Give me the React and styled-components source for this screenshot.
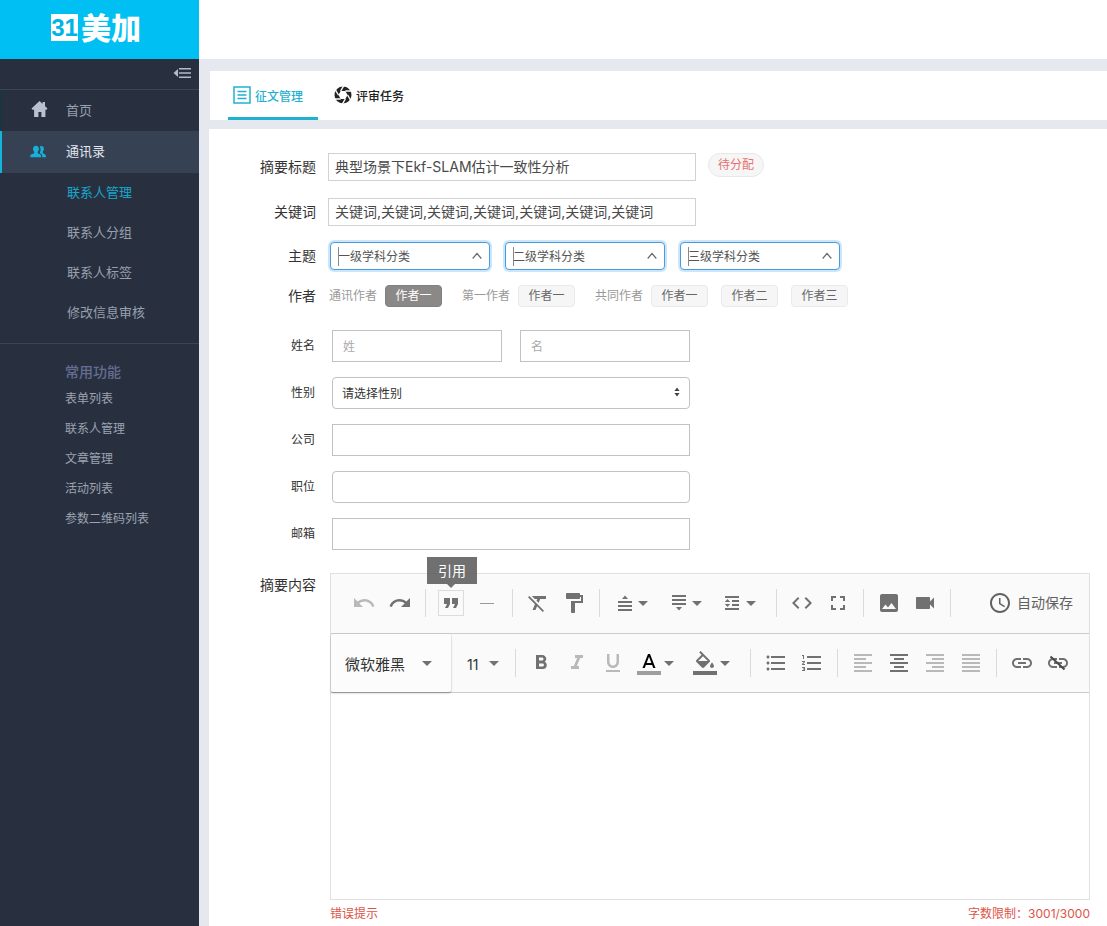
import React from "react";
import styled, { createGlobalStyle } from "styled-components";
import {
  MdUndo,
  MdRedo,
  MdFormatQuote,
  MdFormatClear,
  MdFormatPaint,
  MdCode,
  MdFullscreen,
  MdImage,
  MdVideocam,
  MdAccessTime,
  MdArrowDropDown,
  MdFormatBold,
  MdFormatItalic,
  MdFormatUnderlined,
  MdFormatListBulleted,
  MdFormatListNumbered,
  MdFormatAlignLeft,
  MdFormatAlignCenter,
  MdFormatAlignRight,
  MdFormatAlignJustify,
  MdLink,
} from "react-icons/md";

const GlobalStyle = createGlobalStyle`
  *, *::before, *::after { box-sizing: border-box; }
  body { margin: 0; background: #e6e8ef; }
  body, button, input, select, textarea {
    font-family: Inter, "Noto Sans CJK SC", sans-serif;
  }
  button { padding: 0; border: 0; background: none; cursor: pointer; }
  svg { display: block; flex: none; }
`;

const Page = styled.div`
  display: flex;
  min-height: 100vh;
`;

/* Sidebar */
const Sidebar = styled.aside`
  flex: none;
  width: 199px;
  background: #28303f;
`;

const Logo = styled.a`
  display: flex;
  align-items: center;
  gap: 3px;
  height: 59px;
  padding: 0 0 4px 51px;
  background: #00c0f3;
  color: #fff;
  text-decoration: none;
`;

const LogoMark = styled.span`
  width: 27px;
  height: 27px;
  background: #fff;
  color: #00b4e8;
  font: 700 24px/27px "Liberation Sans", sans-serif;
  text-align: center;
`;

const LogoName = styled.span`
  font-size: 30px;
  font-weight: 900;
  line-height: 30px;
`;

const CollapseBar = styled.div`
  display: flex;
  justify-content: flex-end;
  height: 31px;
  padding: 7px 8px 0 0;
  border-bottom: 1px solid #3c4556;
`;

const CollapseButton = styled.button`
  height: 14px;
  color: #b4bac8;
`;

const NavItem = styled.a`
  display: flex;
  align-items: center;
  gap: 18px;
  height: ${(p) => (p.$active ? 42 : 41)}px;
  padding: 0 0 3px 28px;
  border-left: 2px solid ${(p) => (p.$active ? "#12b5dc" : "#1c3440")};
  background: ${(p) => (p.$active ? "#364154" : "transparent")};
  color: ${(p) => (p.$active ? "#e3e7ee" : "#99a0b0")};
  font-size: 13px;
  text-decoration: none;
`;

const SubNav = styled.nav`
  display: flex;
  flex-direction: column;
  padding-bottom: 10px;
  border-bottom: 1px solid #3c4556;
`;

const SubLink = styled.a`
  height: 40px;
  padding-left: 67px;
  color: ${(p) => (p.$active ? "#17a6cc" : "#989fae")};
  font-size: 13px;
  line-height: 38px;
  text-decoration: none;
`;

const Shortcuts = styled.nav`
  display: flex;
  flex-direction: column;
  padding: 15px 0 0 65px;
`;

const ShortcutTitle = styled.h2`
  margin: 0;
  color: #656d92;
  font-size: 14px;
  font-weight: 500;
  line-height: 25px;
`;

const ShortcutLink = styled.a`
  color: #9ca3b1;
  font-size: 12px;
  line-height: 30px;
  text-decoration: none;
`;

/* Main column */
const Main = styled.main`
  flex: 1;
  min-width: 0;
  display: flex;
  flex-direction: column;
`;

const TopBar = styled.header`
  height: 59px;
  background: #fff;
`;

const Tabs = styled.nav`
  display: flex;
  gap: 11px;
  height: 49px;
  margin: 12px 0 9px 11px;
  padding-left: 18px;
  background: #fff;
`;

const Tab = styled.a`
  display: flex;
  align-items: center;
  gap: 4px;
  min-width: 90px;
  padding: 2px 5px 0;
  border-bottom: 3px solid ${(p) => (p.$active ? "#1fb1d0" : "transparent")};
  color: ${(p) => (p.$active ? "#1fb1d0" : "#222")};
  font-size: 12px;
  font-weight: 500;
  text-decoration: none;
`;

const Form = styled.form`
  flex: 1;
  margin-left: 10px;
  padding: 24px 17px 2px 0;
  background: #fff;
`;

const Row = styled.div`
  display: flex;
  align-items: ${(p) => (p.$top ? "flex-start" : "center")};
  gap: ${(p) => p.$gap || 12}px;
  margin-bottom: ${(p) => p.$space || 16}px;
`;

const Label = styled.label`
  flex: none;
  width: ${(p) => (p.$small ? 106 : 107)}px;
  color: #333;
  font-size: ${(p) => (p.$small ? 12 : 14)}px;
  line-height: 24px;
  text-align: right;
`;

const TitleInput = styled.input`
  width: 368px;
  height: 28px;
  padding: 0 6px 2px;
  border: 1px solid #d2d2d2;
  background: #fff;
  color: #4a4a4a;
  font-size: 14px;
  outline: none;
`;

const Status = styled.span`
  align-self: flex-start;
  padding: 0 9px;
  border: 1px solid #e8e8e8;
  border-radius: 12px;
  background: #f6f6f6;
  color: #e8716f;
  font-size: 12px;
  line-height: 22px;
`;

const TopicList = styled.div`
  display: flex;
  gap: 15px;
  padding-left: 2px;
`;

const TopicBox = styled.span`
  position: relative;
  display: block;
  color: #666;

  &::before {
    content: "";
    position: absolute;
    top: 5px;
    left: 8px;
    width: 1px;
    height: 19px;
    background: #888;
  }

  svg {
    position: absolute;
    top: 10px;
    right: 8px;
    pointer-events: none;
  }
`;

const TopicSelect = styled.select`
  display: block;
  appearance: none;
  width: 160px;
  height: 28px;
  padding: 0 7px;
  border: 1px solid #4a9bd9;
  border-radius: 4px;
  background: #fff;
  box-shadow: 0 0 0 2px #cbe6fb;
  color: #555;
  font-size: 12px;
  outline: none;
`;

const AuthorGroups = styled.div`
  display: flex;
  gap: 20px;
  padding-left: 1px;
`;

const AuthorGroup = styled.div`
  display: flex;
  align-items: center;
  gap: 8px;
  color: #999;
  font-size: 12px;
  line-height: 24px;
`;

const TagList = styled.div`
  display: flex;
  gap: 13px;
`;

const Tag = styled.button`
  width: 57px;
  height: 22px;
  border: 1px solid ${(p) => (p.$selected ? "#827f7f" : "#eaeaea")};
  border-radius: 4px;
  background: ${(p) => (p.$selected ? "#8b8888" : "#f6f6f6")};
  color: ${(p) => (p.$selected ? "#fff" : "#666")};
  font-size: 12px;
  line-height: 20px;
`;

const Fields = styled.div`
  display: flex;
  gap: 18px;
  width: 358px;
`;

const Field = styled.input`
  flex: 1;
  min-width: 0;
  height: 32px;
  padding: 0 10px;
  border: 1px solid #c2c2c2;
  border-radius: ${(p) => (p.$round ? 4 : 0)}px;
  background: #fff;
  color: #333;
  font-size: 12px;
  outline: none;

  &::placeholder { color: #aaa; }
`;

const GenderBox = styled.span`
  position: relative;
  flex: 1;

  svg {
    position: absolute;
    top: 10px;
    right: 10px;
    pointer-events: none;
  }
`;

const GenderSelect = styled.select`
  display: block;
  appearance: none;
  width: 100%;
  height: 32px;
  padding: 0 9px;
  border: 1px solid #c2c2c2;
  border-radius: 4px;
  background: #fff;
  color: #333;
  font-size: 12px;
  outline: none;
`;

/* Editor */
const EditorColumn = styled.div`
  flex: 1;
  min-width: 0;
`;

const Editor = styled.div`
  border: 1px solid #e0e0e0;
`;

const Toolbar = styled.div`
  display: flex;
  align-items: center;
  height: ${(p) => (p.$first ? 60 : 59)}px;
  padding: ${(p) => (p.$first ? "0 0 2px 8px" : "0")};
  border-bottom: 1px solid #cccccc;
  background: #fafafa;
`;

const ToolGroup = styled.div`
  display: flex;
  align-items: center;
  gap: 12px;
  height: 28px;
  padding: 0 13px;
  border-right: 1px solid ${(p) => (p.$last ? "transparent" : "#dadada")};
`;

const Tool = styled.button`
  position: relative;
  display: flex;
  align-items: center;
  height: 24px;
  color: ${(p) => (p.$muted ? "#b9b9b9" : "#717171")};
  outline: ${(p) => (p.$boxed ? "1px solid #dcdcdc" : "none")};

  svg + svg { margin-left: ${(p) => (p.$color ? -4 : -6)}px; }
`;

const Tooltip = styled.span`
  position: absolute;
  bottom: 31px;
  left: 50%;
  width: 50px;
  margin-left: -24px;
  background: rgba(97, 97, 97, 0.9);
  color: #fff;
  font-size: 14px;
  line-height: 27px;
  text-align: center;

  &::after {
    content: "";
    position: absolute;
    top: 100%;
    left: 20px;
    border: 4px solid transparent;
    border-top-color: #717171;
    border-bottom: 0;
  }
`;

const AutoSave = styled.button`
  display: flex;
  align-items: center;
  gap: 5px;
  margin: 0 16px 0 auto;
  color: #616161;
  font-size: 14px;
  line-height: 24px;
`;

const FontBox = styled.span`
  position: relative;
  display: block;
  align-self: stretch;
  color: #717171;

  svg {
    position: absolute;
    top: 50%;
    right: ${(p) => (p.$family ? 12 : 9)}px;
    margin-top: -12px;
    pointer-events: none;
  }
`;

const FontSelect = styled.select`
  appearance: none;
  display: block;
  width: ${(p) => (p.$family ? 120 : 64)}px;
  height: 100%;
  padding: 2px 0 0 ${(p) => (p.$family ? 14 : 16)}px;
  border: 0;
  border-radius: 2px;
  background: ${(p) => (p.$family ? "#fcfcfc" : "transparent")};
  box-shadow: ${(p) => (p.$family ? "0 1px 2px rgba(0, 0, 0, 0.35)" : "none")};
  color: #333;
  font-size: ${(p) => (p.$family ? 15 : 14)}px;
  outline: none;
`;

const SizeGroup = styled.div`
  display: flex;
  height: 28px;
  border-right: 1px solid #dadada;
`;

const Content = styled.textarea`
  display: block;
  width: 100%;
  height: 206px;
  padding: 12px;
  border: 0;
  background: #fff;
  font-size: 14px;
  outline: none;
  resize: none;
`;

const Notes = styled.div`
  display: flex;
  justify-content: space-between;
  padding-top: 4px;
  color: #dd5347;
  font-size: 12px;
  line-height: 20px;
`;

/* Drawn icons */
const Svg = ({ size = 24, children }) => (
  <svg width={size} height={size} viewBox="0 0 24 24" fill="currentColor" aria-hidden="true">
    {children}
  </svg>
);

const HomeIcon = () => (
  <svg width="18" height="18" viewBox="0 0 18 18" fill="#b9c0d0" aria-hidden="true">
    <path d="M9.500 1 17.500 8.600 16.500 9.700H15.400V17H11.400V12H8.400V17H4.100V9.700H2.500L1.500 8.600ZM12.600 2H15V7.500L12.600 5.200Z" />
  </svg>
);

const PeopleIcon = () => (
  <svg width="18" height="18" viewBox="0 0 18 18" fill="#16b0d8" aria-hidden="true">
    <path d="M6 3.800c1.900 0 2.900 1.300 2.900 3.200 0 1.200-.5 2.200-1.200 2.800v1.300c0 .7 3.400 1 3.400 3v1.200H.3v-1.200c0-2 3.900-2.300 3.900-3V9.800C3.500 9.200 3 8.200 3 7c0-1.900 1.100-3.200 3-3.200z" />
    <path d="M9.700 5c.4-.6 1-.9 1.800-.9 1.500 0 2.400 1.200 2.400 2.900 0 1.100-.4 2-1.100 2.600v1.500c0 .6 3.100 1 3.100 3v1.200h-3.700v-1.200c0-1.500-1.100-2.300-2.300-2.800v-1c.6-.9.800-2.100.7-3.200 0-.8-.4-1.600-.9-2.100z" />
  </svg>
);

const CollapseIcon = () => (
  <svg width="18" height="14" viewBox="0 0 18 14" fill="currentColor" aria-hidden="true">
    <path d="M5 3v8L0.500 7zM6 2h12v1.500H6zM6 6.300h12v1.500H6zM6 10.500h12V12H6z" />
  </svg>
);

const ListIcon = () => (
  <svg width="18" height="18" viewBox="0 0 18 18" fill="none" stroke="currentColor" aria-hidden="true">
    <path d="M1 1h16v16H1z" strokeWidth="1.500" />
    <path d="M4.500 5.500h9M4.500 9h9M4.500 12.500h9" strokeWidth="1.500" />
  </svg>
);

const ApertureIcon = () => (
  <svg width="18" height="18" viewBox="0 0 18 18" aria-hidden="true">
    <circle cx="9" cy="9" r="8.500" fill="#222" />
    <path d="M13.600 9 11.300 13H6.700L4.400 9 6.700 5h4.600z" fill="#fff" />
    {[0, 60, 120, 180, 240, 300].map((angle) => (
      <path
        key={angle}
        d="M11.300 13 7.850 19"
        stroke="#fff"
        strokeWidth="1.400"
        transform={`rotate(${angle} 9 9)`}
      />
    ))}
  </svg>
);

const ChevronUp = () => (
  <svg width="10" height="8" viewBox="0 0 10 8" fill="none" stroke="currentColor" aria-hidden="true">
    <path d="M.7 6.500 5 1.500l4.300 5" strokeWidth="1.200" />
  </svg>
);

const Sorter = () => (
  <svg width="6" height="10" viewBox="0 0 6 10" fill="#444" aria-hidden="true">
    <path d="M3 .5 5.600 4H.4zM3 9.500.4 6h5.200z" />
  </svg>
);

const RuleIcon = () => (
  <Svg>
    <path fill="#999" d="M5 12h14v1H5z" />
  </Svg>
);

const SpaceBefore = () => (
  <Svg>
    <path d="M12 4.500 15 8H9zM5 10h14v2H5zM5 14h14v2H5zM5 18h14v2H5z" />
  </Svg>
);

const SpaceAfter = () => (
  <Svg>
    <path d="M5 4h14v2H5zM5 8h14v2H5zM5 12h14v2H5zM9 16h6l-3 3.500z" />
  </Svg>
);

const LineHeight = () => (
  <Svg>
    <path d="M4 5h14v2H4zM11 9h7v2h-7zM11 13h7v2h-7zM4 17h14v2H4zM6.500 8 9.200 11H3.800zM3.800 13h5.400l-2.700 3z" />
  </Svg>
);

const TextColor = () => (
  <Svg>
    <path fill="#9e9e9e" d="M0 20h24v4H0z" />
    <path
      fill="#000"
      d="M11 3 5.500 17h2.250l1.120-3h6.250l1.120 3h2.250L13 3h-2zm-1.380 9L12 5.670 14.380 12H9.620z"
    />
  </Svg>
);

const FillColor = () => (
  <Svg>
    <path d="M16.560 8.940 7.620 0 6.210 1.410l2.380 2.380-5.150 5.150c-.59.59-.59 1.540 0 2.120l5.500 5.500c.29.29.68.44 1.060.44s.77-.15 1.060-.44l5.500-5.500c.59-.58.59-1.530 0-2.120zM5.210 10 10 5.210 14.790 10H5.210zM19 11.500s-2 2.170-2 3.500c0 1.100.9 2 2 2s2-.9 2-2c0-1.330-2-3.500-2-3.500zM0 20h24v4H0z" />
  </Svg>
);

const UnlinkIcon = () => (
  <Svg>
    <path d="M3.900 12c0-1.710 1.390-3.100 3.100-3.100h4V7H7c-2.760 0-5 2.240-5 5s2.240 5 5 5h4v-1.900H7c-1.710 0-3.100-1.390-3.100-3.100zM8 13h8v-2H8v2zm9-6h-4v1.900h4c1.710 0 3.100 1.390 3.100 3.100s-1.390 3.100-3.100 3.100h-4V17h4c2.760 0 5-2.240 5-5s-2.240-5-5-5z" />
    <path d="M4.500 5.500 18.500 18.500" stroke="#4a4a4a" strokeWidth="2" />
  </Svg>
);

const Arrow = () => <MdArrowDropDown size={24} />;

const subLinks = ["联系人管理", "联系人分组", "联系人标签", "修改信息审核"];
const shortcuts = ["表单列表", "联系人管理", "文章管理", "活动列表", "参数二维码列表"];
const topics = ["一级学科分类", "二级学科分类", "三级学科分类"];
const authors = [
  { role: "通讯作者", names: ["作者一"], selected: true },
  { role: "第一作者", names: ["作者一"] },
  { role: "共同作者", names: ["作者一", "作者二", "作者三"] },
];

const ToolButton = ({ icon: Icon, label, children, ...rest }) => (
  <Tool type="button" aria-label={label} {...rest}>
    <Icon size={24} />
    {children}
  </Tool>
);

export default function App() {
  return (
    <Page>
      <GlobalStyle />
      <Sidebar>
        <Logo href="#">
          <LogoMark>31</LogoMark>
          <LogoName>美加</LogoName>
        </Logo>
        <CollapseBar>
          <CollapseButton type="button" aria-label="收起菜单">
            <CollapseIcon />
          </CollapseButton>
        </CollapseBar>
        <NavItem href="#">
          <HomeIcon />
          首页
        </NavItem>
        <NavItem href="#" $active>
          <PeopleIcon />
          通讯录
        </NavItem>
        <SubNav>
          {subLinks.map((name, i) => (
            <SubLink key={name} href="#" $active={i === 0}>
              {name}
            </SubLink>
          ))}
        </SubNav>
        <Shortcuts>
          <ShortcutTitle>常用功能</ShortcutTitle>
          {shortcuts.map((name) => (
            <ShortcutLink key={name} href="#">
              {name}
            </ShortcutLink>
          ))}
        </Shortcuts>
      </Sidebar>

      <Main>
        <TopBar />
        <Tabs>
          <Tab href="#" $active>
            <ListIcon />
            征文管理
          </Tab>
          <Tab href="#">
            <ApertureIcon />
            评审任务
          </Tab>
        </Tabs>

        <Form>
          <Row $space={17}>
            <Label htmlFor="title">摘要标题</Label>
            <TitleInput id="title" defaultValue="典型场景下Ekf-SLAM估计一致性分析" />
            <Status>待分配</Status>
          </Row>
          <Row>
            <Label htmlFor="keywords">关键词</Label>
            <TitleInput id="keywords" defaultValue="关键词,关键词,关键词,关键词,关键词,关键词,关键词" />
          </Row>
          <Row $space={14}>
            <Label htmlFor="topic-0">主题</Label>
            <TopicList>
              {topics.map((name, i) => (
                <TopicBox key={name}>
                  <TopicSelect id={`topic-${i}`} aria-label={name}>
                    <option>{name}</option>
                  </TopicSelect>
                  <ChevronUp />
                </TopicBox>
              ))}
            </TopicList>
          </Row>
          <Row $space={22}>
            <Label as="span">作者</Label>
            <AuthorGroups>
              {authors.map((group) => (
                <AuthorGroup key={group.role}>
                  {group.role}
                  <TagList>
                    {group.names.map((name) => (
                      <Tag key={name} type="button" $selected={group.selected}>
                        {name}
                      </Tag>
                    ))}
                  </TagList>
                </AuthorGroup>
              ))}
            </AuthorGroups>
          </Row>

          <Row $gap={17} $space={15}>
            <Label $small htmlFor="surname">姓名</Label>
            <Fields>
              <Field id="surname" placeholder="姓" />
              <Field aria-label="名" placeholder="名" />
            </Fields>
          </Row>
          <Row $gap={17} $space={15}>
            <Label $small htmlFor="gender">性别</Label>
            <Fields>
              <GenderBox>
                <GenderSelect id="gender">
                  <option>请选择性别</option>
                </GenderSelect>
                <Sorter />
              </GenderBox>
            </Fields>
          </Row>
          <Row $gap={17} $space={15}>
            <Label $small htmlFor="company">公司</Label>
            <Fields>
              <Field id="company" />
            </Fields>
          </Row>
          <Row $gap={17} $space={15}>
            <Label $small htmlFor="position">职位</Label>
            <Fields>
              <Field id="position" $round />
            </Fields>
          </Row>
          <Row $gap={17} $space={23}>
            <Label $small htmlFor="email">邮箱</Label>
            <Fields>
              <Field id="email" />
            </Fields>
          </Row>

          <Row $top $gap={14} $space={1}>
            <Label htmlFor="content">摘要内容</Label>
            <EditorColumn>
              <Editor>
                <Toolbar $first>
                  <ToolGroup>
                    <ToolButton icon={MdUndo} label="撤销" $muted />
                    <ToolButton icon={MdRedo} label="重做" />
                  </ToolGroup>
                  <ToolGroup>
                    <ToolButton icon={MdFormatQuote} label="引用" $boxed>
                      <Tooltip>引用</Tooltip>
                    </ToolButton>
                    <ToolButton icon={RuleIcon} label="分割线" />
                  </ToolGroup>
                  <ToolGroup>
                    <ToolButton icon={MdFormatClear} label="清除格式" />
                    <ToolButton icon={MdFormatPaint} label="格式刷" />
                  </ToolGroup>
                  <ToolGroup>
                    <ToolButton icon={SpaceBefore} label="段前距"><Arrow /></ToolButton>
                    <ToolButton icon={SpaceAfter} label="段后距"><Arrow /></ToolButton>
                    <ToolButton icon={LineHeight} label="行间距"><Arrow /></ToolButton>
                  </ToolGroup>
                  <ToolGroup>
                    <ToolButton icon={MdCode} label="源代码" />
                    <ToolButton icon={MdFullscreen} label="全屏" />
                  </ToolGroup>
                  <ToolGroup>
                    <ToolButton icon={MdImage} label="图片" />
                    <ToolButton icon={MdVideocam} label="视频" />
                  </ToolGroup>
                  <AutoSave type="button">
                    <MdAccessTime size={24} />
                    自动保存
                  </AutoSave>
                </Toolbar>
                <Toolbar>
                  <FontBox $family>
                    <FontSelect $family aria-label="字体">
                      <option>微软雅黑</option>
                    </FontSelect>
                    <Arrow />
                  </FontBox>
                  <SizeGroup>
                    <FontBox>
                      <FontSelect aria-label="字号">
                        <option>11</option>
                      </FontSelect>
                      <Arrow />
                    </FontBox>
                  </SizeGroup>
                  <ToolGroup>
                    <ToolButton icon={MdFormatBold} label="加粗" />
                    <ToolButton icon={MdFormatItalic} label="斜体" $muted />
                    <ToolButton icon={MdFormatUnderlined} label="下划线" $muted />
                    <ToolButton icon={TextColor} label="文字颜色" $color><Arrow /></ToolButton>
                    <ToolButton icon={FillColor} label="背景颜色" $color><Arrow /></ToolButton>
                  </ToolGroup>
                  <ToolGroup>
                    <ToolButton icon={MdFormatListBulleted} label="无序列表" />
                    <ToolButton icon={MdFormatListNumbered} label="有序列表" />
                  </ToolGroup>
                  <ToolGroup>
                    <ToolButton icon={MdFormatAlignLeft} label="左对齐" $muted />
                    <ToolButton icon={MdFormatAlignCenter} label="居中对齐" />
                    <ToolButton icon={MdFormatAlignRight} label="右对齐" $muted />
                    <ToolButton icon={MdFormatAlignJustify} label="两端对齐" $muted />
                  </ToolGroup>
                  <ToolGroup $last>
                    <ToolButton icon={MdLink} label="链接" />
                    <ToolButton icon={UnlinkIcon} label="取消链接" />
                  </ToolGroup>
                </Toolbar>
                <Content id="content" />
              </Editor>
              <Notes>
                <span>错误提示</span>
                <span>字数限制：3001/3000</span>
              </Notes>
            </EditorColumn>
          </Row>
        </Form>
      </Main>
    </Page>
  );
}
